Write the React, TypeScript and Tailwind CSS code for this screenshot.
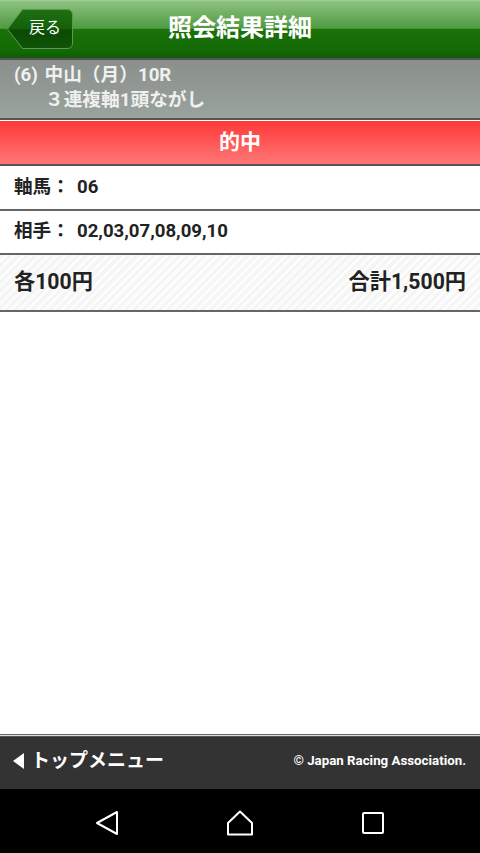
import React from "react";

const FONT = "font-['Roboto','Noto_Sans_CJK_JP',sans-serif]";

function BackButton() {
    return (
        <div className="absolute left-[7px] top-[9px] w-[66px] h-[40px]">
            <svg className="absolute inset-0" width="66" height="40" viewBox="0 0 66 40">
                <defs>
                    <linearGradient id="backFill" x1="0" y1="0" x2="0" y2="1">
                        <stop offset="0" stopColor="#206f12" />
                        <stop offset="0.5" stopColor="#14600a" />
                        <stop offset="0.52" stopColor="#0b4a04" />
                        <stop offset="1" stopColor="#0f5407" />
                    </linearGradient>
                </defs>
                <path
                    d="M0.5 20 L15.5 0.5 H60 Q65.5 0.5 65.5 6 V34 Q65.5 39.5 60 39.5 H15.5 Z"
                    fill="url(#backFill)"
                    stroke="#5c9a4e"
                    strokeWidth="1"
                />
            </svg>
            <span className="absolute left-[22px] top-[8px] text-[16px] leading-[22px] text-white">戻る</span>
        </div>
    );
}

function InfoRow({ label, value }: { label: string; value: string }) {
    return (
        <div className="flex items-center h-full pl-[14px] font-bold text-[18.6px] text-[#222]">
            <span className="w-[63px]">{label}</span>
            <span>{value}</span>
        </div>
    );
}

export default function App() {
    return (
        <div className={`${FONT} w-[480px] h-[853px] flex flex-col bg-white overflow-hidden`}>
            {/* header */}
            <header className="relative h-[58px] shrink-0 flex items-center justify-center bg-[linear-gradient(#a5d09a_0%,#8cc280_3%,#4f9a40_49%,#1a7209_50%,#146a05_85%,#0f5c03_100%)]">
                <BackButton />
                <h1 className="text-[24px] font-bold text-white leading-none mb-[3px]">照会結果詳細</h1>
            </header>
            <div className="h-[2px] shrink-0 bg-[#555]" />

            {/* race info */}
            <div className="h-[58px] shrink-0 bg-[linear-gradient(#8a8f8b,#9aa39d)] text-[#f0f0f0] font-bold text-[18.7px] leading-[25px] pl-[14px] pt-[3px]">
                <div>(6) <span className="ml-[2px]">中山（月）10R</span></div>
                <div className="pl-[31px]">３連複軸1頭ながし</div>
            </div>
            <div className="h-[3px] shrink-0 bg-[linear-gradient(#555_0,#555_66%,#fff_66%)]" />

            {/* result */}
            <div className="h-[45px] shrink-0 flex items-center justify-center bg-[linear-gradient(#ff3838,#ff7676)] text-white font-bold text-[21px] border-b-2 border-[#555]">
                的中
            </div>

            {/* details */}
            <div className="h-[45px] shrink-0 border-b-2 border-[#666]">
                <InfoRow label="軸馬：" value="06" />
            </div>
            <div className="h-[44px] shrink-0 border-b-2 border-[#666]">
                <InfoRow label="相手：" value="02,03,07,08,09,10" />
            </div>
            <div className="h-[57px] shrink-0 flex items-center justify-between px-[14px] pb-[2px] font-bold text-[21.2px] text-[#222] border-b-2 border-[#666] bg-[repeating-linear-gradient(135deg,#f5f5f5_0,#f5f5f5_3px,#fcfcfc_3px,#fcfcfc_6px)]">
                <span>各100円</span>
                <span>合計1,500円</span>
            </div>

            <div className="flex-1" />

            {/* footer */}
            <div className="h-[3px] shrink-0 bg-[linear-gradient(#666_0,#666_33%,#ddd_33%,#ddd_66%,#555_66%)]" />
            <footer className="h-[52px] shrink-0 flex items-center justify-between pl-[13px] pr-[14px] pb-[4px] bg-[#333] text-white font-bold">
                <div className="flex items-center gap-[7px] text-[19px]">
                    <svg width="11" height="16" viewBox="0 0 11 16">
                        <path d="M11 0 V16 L0 8 Z" fill="#fff" />
                    </svg>
                    <span>トップメニュー</span>
                </div>
                <span className="text-[13.3px]">© Japan Racing Association.</span>
            </footer>

            {/* android nav */}
            <nav className="h-[64px] shrink-0 bg-black flex items-center justify-center gap-[107px] pt-[3px]">
                <svg width="24" height="26" viewBox="0 0 24 26" fill="none" stroke="#fff" strokeWidth="2" strokeLinejoin="round">
                    <path d="M22 2 V24 L2 13 Z" />
                </svg>
                <svg width="28" height="26" viewBox="0 0 28 26" fill="none" stroke="#fff" strokeWidth="2" strokeLinejoin="round">
                    <path d="M14 1.5 L26 13 V24.5 H2 V13 Z" />
                </svg>
                <svg width="24" height="26" viewBox="0 0 24 26" fill="none" stroke="#fff" strokeWidth="2" strokeLinejoin="round">
                    <rect x="2" y="3" width="20" height="20" rx="1" />
                </svg>
            </nav>
        </div>
    );
}
